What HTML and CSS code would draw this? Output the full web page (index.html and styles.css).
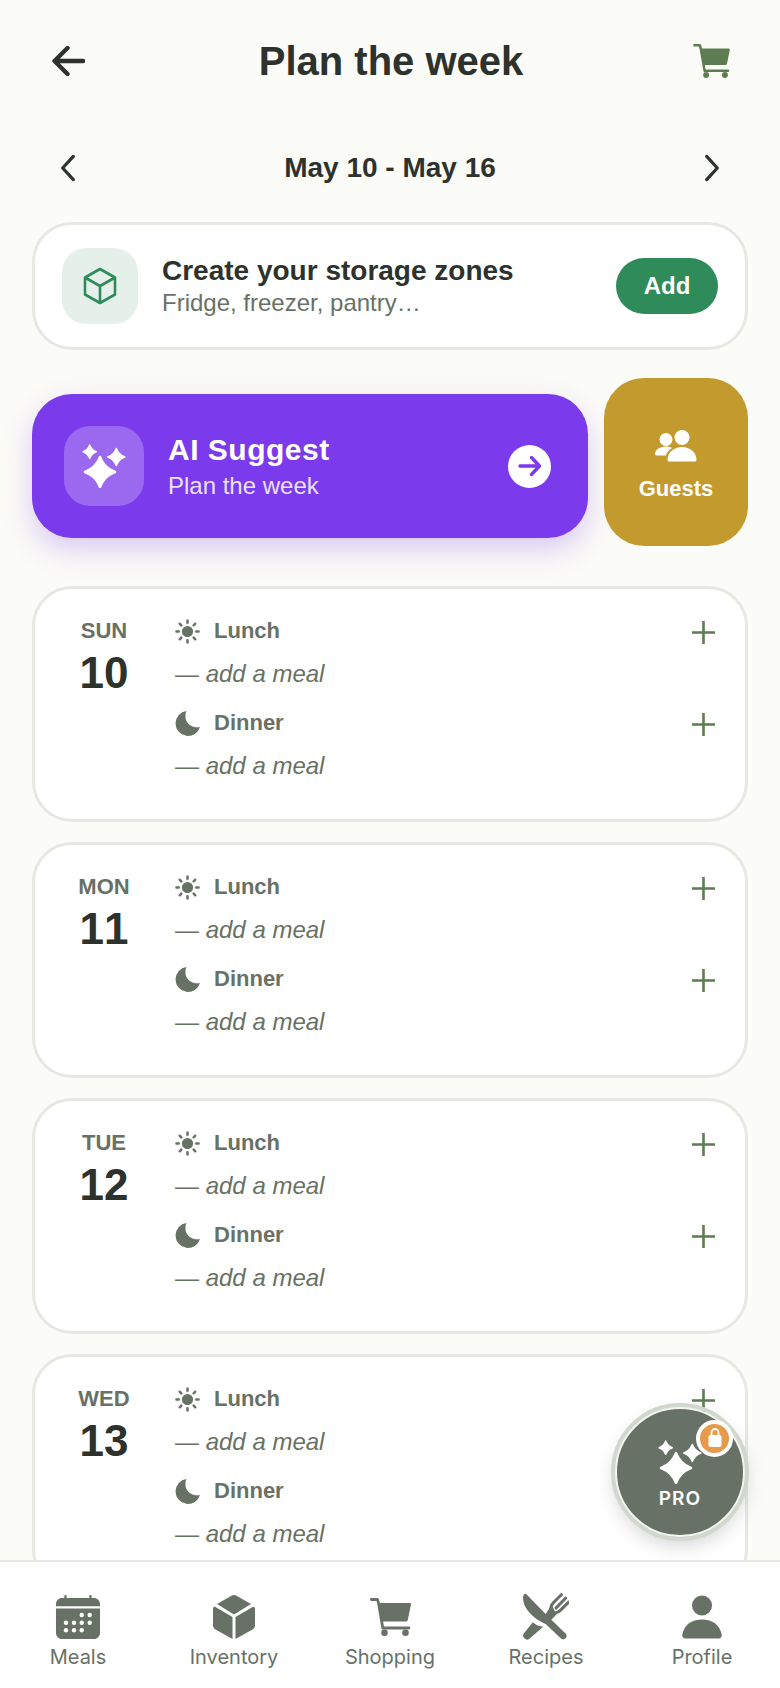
FILE: index.html
```html
<!DOCTYPE html>
<html lang="en">
<head>
<meta charset="utf-8">
<title>Plan the week</title>
<link rel="stylesheet" href="styles.css">
</head>
<body>
<svg class="defs" width="0" height="0" aria-hidden="true">
  <defs>
    <symbol id="sun" viewBox="0 0 26 26">
      <circle cx="13" cy="13" r="5.800" fill="currentColor"/>
      <g stroke="currentColor" stroke-width="2.600" stroke-linecap="round">
        <path d="M13 1.500v2.400M13 22.100v2.400M1.500 13h2.400M22.100 13h2.400M4.900 4.900l1.700 1.700M19.400 19.400l1.700 1.700M4.900 21.100l1.700-1.700M19.400 6.600l1.700-1.700"/>
      </g>
    </symbol>
    <symbol id="moon" viewBox="0 0 26 26">
      <path d="M11.800 0A13 13 0 1 0 26 16.600C20 18.200 12.500 14.500 11.100 8 10.600 5 11 2.500 11.800 0Z" fill="currentColor"/>
    </symbol>
    <symbol id="plus" viewBox="0 0 23 23">
      <path d="M11.500 0v23M0 11.500h23" stroke="currentColor" stroke-width="2.600" fill="none"/>
    </symbol>
    <symbol id="cart" viewBox="0 0 41 38">
      <path d="M1.400 1.500H7.500L8.600 5.500M8.600 5.500l4.200 24.500h26.200" fill="none" stroke="currentColor" stroke-width="2.800" stroke-linecap="round" stroke-linejoin="round"/>
      <path d="M9 5h30.500c1 0 1.600.8 1.400 1.800L37.800 22c-.2.900-1 1.500-1.900 1.500H12.200Z" fill="currentColor"/>
      <circle cx="14.500" cy="34.700" r="3.300" fill="currentColor"/>
      <circle cx="35.500" cy="34.700" r="3.300" fill="currentColor"/>
    </symbol>
    <symbol id="sparks" viewBox="0 0 44 44">
      <path d="M18 13Q22 24 33 28 22 32 18 43 14 32 3 28 14 24 18 13Z" fill="currentColor" stroke="currentColor" stroke-width="2.500" stroke-linejoin="round"/>
      <path d="M7.700 1.200Q9.500 5.900 14.200 7.700 9.500 9.500 7.700 14.200 5.900 9.500 1.200 7.700 5.900 5.900 7.700 1.200Z" fill="currentColor" stroke="currentColor" stroke-width="1.600" stroke-linejoin="round"/>
      <path d="M34.300 4.500Q36.600 10.700 42.800 13 36.600 15.300 34.300 21.500 32 15.300 25.800 13 32 10.700 34.300 4.500Z" fill="currentColor" stroke="currentColor" stroke-width="1.600" stroke-linejoin="round"/>
    </symbol>
  </defs>
</svg>
<div class="app">
  <header class="top">
    <button class="bare" aria-label="Back">
      <svg class="back" viewBox="0 0 33 30"><path d="M31 15H3M15.500 2 2.500 15l13 13" fill="none" stroke="currentColor" stroke-width="4.400" stroke-linecap="round" stroke-linejoin="round"/></svg>
    </button>
    <h1>Plan the week</h1>
    <button class="bare cart-top" aria-label="Cart"><svg class="cart-ic"><use href="#cart"/></svg></button>
  </header>

  <div class="week">
    <svg class="chev" viewBox="0 0 18 30"><path d="M15 2 3 15l12 13" fill="none" stroke="currentColor" stroke-width="3.600" stroke-linecap="round" stroke-linejoin="round"/></svg>
    <div class="range">May 10 - May 16</div>
    <svg class="chev chev-r" viewBox="0 0 18 30"><path d="m3 2 12 13L3 28" fill="none" stroke="currentColor" stroke-width="3.600" stroke-linecap="round" stroke-linejoin="round"/></svg>
  </div>

  <section class="zones">
    <div class="zones-ic">
      <svg viewBox="0 0 34 38"><path d="M17 2 32 10.500v17L17 36 2 27.500v-17ZM2 10.500 17 19l15-8.500M17 19v17" fill="none" stroke="currentColor" stroke-width="2.600" stroke-linejoin="round"/></svg>
    </div>
    <div class="zones-txt">
      <div class="zones-t">Create your storage zones</div>
      <div class="zones-s">Fridge, freezer, pantry…</div>
    </div>
    <button class="add">Add</button>
  </section>

  <section class="actions">
    <div class="ai">
      <div class="ai-ic"><svg><use href="#sparks"/></svg></div>
      <div class="ai-txt">
        <div class="ai-t">AI Suggest</div>
        <div class="ai-s">Plan the week</div>
      </div>
      <div class="ai-go"><svg viewBox="0 0 24 24"><path d="M2 12h19M13.500 3.500 21.500 12l-8 8.500" fill="none" stroke="currentColor" stroke-width="3.400" stroke-linecap="round" stroke-linejoin="round"/></svg></div>
    </div>
    <div class="guests">
      <svg viewBox="0 0 42 32"><circle cx="11" cy="9.500" r="6.500" fill="currentColor"/><circle cx="27" cy="7.500" r="7.500" fill="currentColor"/><path d="M0 23.500C1 18.500 6 16.500 11 16.500c2.500 0 4.500.5 6 1.500-3 2-5.500 4.500-6 7.500H1.500C.5 25.500 0 24.500 0 23.500Z" fill="currentColor"/><path d="M12.500 30c0-7.500 6.500-13 14.500-13s14.500 5.500 14.500 13c0 1-1 1.500-2 1.500h-25c-1 0-2-.5-2-1.500Z" fill="currentColor"/></svg>
      <span>Guests</span>
    </div>
  </section>

  <main class="days">
    <article class="day">
      <div class="date"><div class="dow">SUN</div><div class="num">10</div></div>
      <div class="meals">
        <div class="meal"><div class="mhead"><svg class="mic"><use href="#sun"/></svg><span>Lunch</span><svg class="plus"><use href="#plus"/></svg></div><div class="empty">— <i>add a meal</i></div></div>
        <div class="meal"><div class="mhead"><svg class="mic"><use href="#moon"/></svg><span>Dinner</span><svg class="plus"><use href="#plus"/></svg></div><div class="empty">— <i>add a meal</i></div></div>
      </div>
    </article>
    <article class="day">
      <div class="date"><div class="dow">MON</div><div class="num">11</div></div>
      <div class="meals">
        <div class="meal"><div class="mhead"><svg class="mic"><use href="#sun"/></svg><span>Lunch</span><svg class="plus"><use href="#plus"/></svg></div><div class="empty">— <i>add a meal</i></div></div>
        <div class="meal"><div class="mhead"><svg class="mic"><use href="#moon"/></svg><span>Dinner</span><svg class="plus"><use href="#plus"/></svg></div><div class="empty">— <i>add a meal</i></div></div>
      </div>
    </article>
    <article class="day">
      <div class="date"><div class="dow">TUE</div><div class="num">12</div></div>
      <div class="meals">
        <div class="meal"><div class="mhead"><svg class="mic"><use href="#sun"/></svg><span>Lunch</span><svg class="plus"><use href="#plus"/></svg></div><div class="empty">— <i>add a meal</i></div></div>
        <div class="meal"><div class="mhead"><svg class="mic"><use href="#moon"/></svg><span>Dinner</span><svg class="plus"><use href="#plus"/></svg></div><div class="empty">— <i>add a meal</i></div></div>
      </div>
    </article>
    <article class="day">
      <div class="date"><div class="dow">WED</div><div class="num">13</div></div>
      <div class="meals">
        <div class="meal"><div class="mhead"><svg class="mic"><use href="#sun"/></svg><span>Lunch</span><svg class="plus"><use href="#plus"/></svg></div><div class="empty">— <i>add a meal</i></div></div>
        <div class="meal"><div class="mhead"><svg class="mic"><use href="#moon"/></svg><span>Dinner</span><svg class="plus"><use href="#plus"/></svg></div><div class="empty">— <i>add a meal</i></div></div>
      </div>
    </article>
  </main>

  <div class="fab">
    <svg class="fab-ic"><use href="#sparks"/></svg>
    <span>PRO</span>
    <div class="lock"><svg viewBox="0 0 14 19"><path d="M3.500 8V4.500a3.500 3.500 0 0 1 7 0V8" fill="none" stroke="currentColor" stroke-width="1.800"/><rect x=".5" y="7" width="13" height="12" rx="2" fill="currentColor"/></svg></div>
  </div>

  <nav class="tabs">
    <div class="tab">
      <svg viewBox="0 0 44 44"><path d="M9.500 0c.7 0 1.200.5 1.200 1.200V3h22.600V1.200c0-.7.5-1.200 1.200-1.200s1.200.5 1.200 1.200V3H38c3.300 0 6 2.700 6 6v2.200H0V9c0-3.300 2.700-6 6-6h2.300V1.200C8.300.5 8.800 0 9.500 0ZM0 13.400h44V38c0 3.300-2.700 6-6 6H6c-3.300 0-6-2.700-6-6Z" fill="currentColor"/><g fill="#fff"><circle cx="25.700" cy="20" r="2.200"/><circle cx="33.700" cy="20" r="2.200"/><circle cx="10" cy="27.700" r="2.200"/><circle cx="18" cy="27.700" r="2.200"/><circle cx="25.700" cy="27.700" r="2.200"/><circle cx="33.700" cy="27.700" r="2.200"/><circle cx="10" cy="35.300" r="2.200"/><circle cx="18" cy="35.300" r="2.200"/><circle cx="25.700" cy="35.300" r="2.200"/></g></svg>
      <span>Meals</span>
    </div>
    <div class="tab">
      <svg viewBox="0 0 42 44"><path d="M18.500.7c1.600-.9 3.400-.9 5 0L38 9 21 19.500 4 9Z" fill="currentColor"/><path d="M1.500 11.500 19.500 22v22L2.500 34.500C1 33.600 0 32 0 30.300V14c0-1 .5-1.800 1.500-2.500Z" fill="currentColor"/><path d="M40.500 11.500 22.500 22v22l17-9.500c1.500-.9 2.500-2.500 2.500-4.200V14c0-1-.5-1.800-1.500-2.500Z" fill="currentColor"/></svg>
      <span>Inventory</span>
    </div>
    <div class="tab">
      <svg class="tab-cart"><use href="#cart"/></svg>
      <span>Shopping</span>
    </div>
    <div class="tab">
      <svg class="tab-recipes" viewBox="0 0 132 135">
        <path d="M28 84C36 92 48 96 58 97L20 130A10 10 0 0 1 4 114Z" fill="currentColor"/>
        <path d="M82 34 96 62 70 88 58 72Z" fill="currentColor"/>
        <path d="M110 5 87 28C78 37 79 49 85 56M122 15 95 43M131 26 108 49C99 58 88 60 80 52" fill="none" stroke="currentColor" stroke-width="9" stroke-linecap="round"/>
        <path d="M65 89C52 85 40 78 30 69" fill="none" stroke="#fff" stroke-width="7"/>
        <path d="M9 3 79 75 123 117A10 10 0 0 1 109 131L65 89C40 80 0 50 0 14 0 6 4 0 9 3Z" fill="currentColor"/>
      </svg>
      <span>Recipes</span>
    </div>
    <div class="tab">
      <svg viewBox="0 0 42 46"><circle cx="21" cy="11" r="10.500" fill="currentColor"/><path d="M.5 41C2.500 31 10 25.500 21 25.500S39.500 31 41.500 41c.6 2.500-.8 4.500-3 4.500h-35c-2.200 0-3.600-2-3-4.500Z" fill="currentColor"/></svg>
      <span>Profile</span>
    </div>
  </nav>
</div>
</body>
</html>
```
FILE: styles.css
```css
* { box-sizing: border-box; }
html, body { margin: 0; padding: 0; }
body { background: #fbfbf7; font-family: "Liberation Sans", Arial, sans-serif; color: #2d322c; }
.defs { position: absolute; }
.app { position: relative; width: 780px; height: 1688px; overflow: hidden; }
.bare { background: none; border: 0; padding: 0; color: inherit; display: flex; }

.top { display: grid; grid-template-columns: 1fr auto 1fr; align-items: center; height: 50px; margin-top: 36px; padding: 0 50px 0 52px; }
.back { width: 33px; height: 30px; }
.top h1 { margin: 0; font-size: 40px; line-height: 50px; font-weight: 700; }
.cart-top { color: #5e7c52; justify-self: end; }
.cart-ic { width: 37px; height: 34px; }

.week { display: grid; grid-template-columns: 1fr auto 1fr; align-items: center; margin-top: 62px; height: 40px; padding: 0 60px; }
.chev { width: 16px; height: 28px; }
.chev-r { justify-self: end; }
.range { font-size: 28px; font-weight: 700; }

.zones { display: flex; align-items: center; margin: 34px 32px 0; height: 128px; background: #fff; border: 3px solid #e8e8e3; border-radius: 40px; padding: 0 27px; }
.zones-ic { width: 76px; height: 76px; border-radius: 24px; background: #e6f0ea; color: #2f8b59; display: flex; align-items: center; justify-content: center; }
.zones-ic svg { width: 34px; height: 38px; }
.zones-txt { flex: 1; margin-left: 24px; }
.zones-t { font-size: 28px; font-weight: 700; line-height: 34px; }
.zones-s { font-size: 24px; line-height: 30px; color: #687165; }
.add { width: 102px; height: 56px; border: 0; border-radius: 28px; background: #2f8b59; color: #fff; font: 700 24px "Liberation Sans", Arial, sans-serif; padding: 0; }

.actions { display: flex; align-items: center; gap: 16px; margin: 28px 32px 0; }
.ai { flex: 1; height: 144px; margin-top: 8px; display: flex; align-items: center; background: #7c3aed; border-radius: 40px; padding: 0 37px 0 32px; box-shadow: 0 12px 28px rgba(124, 58, 237, 0.25); color: #fff; }
.ai-ic { width: 80px; height: 80px; border-radius: 26px; background: #9b68f0; display: flex; align-items: center; justify-content: center; }
.ai-ic svg { width: 44px; height: 44px; }
.ai-txt { flex: 1; margin-left: 24px; }
.ai-t { font-size: 30px; font-weight: 700; line-height: 36px; letter-spacing: 0.5px; }
.ai-s { font-size: 24px; line-height: 30px; color: #ebe1fc; margin-top: 3px; }
.ai-go { width: 43px; height: 43px; border-radius: 50%; background: #fff; color: #7c3aed; display: flex; align-items: center; justify-content: center; }
.ai-go svg { width: 24px; height: 24px; }
.guests { width: 144px; height: 168px; border-radius: 40px; background: #c39a2d; color: #fff; display: flex; flex-direction: column; align-items: center; padding-top: 52px; }
.guests svg { width: 42px; height: 32px; }
.guests span { font-size: 22px; font-weight: 700; line-height: 30px; margin-top: 12px; }

.days { display: flex; flex-direction: column; gap: 20px; margin: 40px 32px 0; }
.day { flex: none; display: flex; height: 236px; background: #fff; border: 3px solid #e8e8e3; border-radius: 40px; padding: 27px 30px 0 25px; }
.date { width: 88px; text-align: center; }
.dow { font-size: 22px; font-weight: 700; line-height: 30px; color: #687165; }
.num { font-size: 44px; font-weight: 700; line-height: 52px; margin-top: 1px; color: #2d322c; font-kerning: none; }
.meals { flex: 1; margin-left: 27px; color: #687165; }
.meal { height: 92px; }
.mhead { display: flex; align-items: center; height: 30px; font-size: 22px; font-weight: 700; }
.mic { width: 25px; height: 25px; margin-right: 14px; }
.mhead span { flex: 1; }
.plus { width: 23px; height: 23px; color: #5e7c52; margin-top: 2px; }
.empty { font-size: 24px; line-height: 36px; margin-top: 10px; }
.empty i { font-style: italic; }

.fab { position: absolute; left: 615px; top: 1407px; width: 130px; height: 130px; border-radius: 50%; background: #687165; border: 2px solid #f4f4f0; outline: 4px solid #d0d8cd; color: #fff; box-shadow: 0 8px 20px rgba(0,0,0,.18); display: flex; flex-direction: column; align-items: center; padding-top: 31px; }
.fab-ic { width: 44px; height: 44px; }
.fab span { font: 600 19px Inter, sans-serif; letter-spacing: 1px; margin-top: 3px; }
.lock { position: absolute; right: 10px; top: 11px; width: 37px; height: 37px; border-radius: 50%; background: #e79a4c; border: 4px solid #fff; color: #fff; display: flex; align-items: center; justify-content: center; }
.lock svg { width: 14px; height: 19px; margin-top: -2px; }

.tabs { position: absolute; left: 0; right: 0; bottom: 0; height: 128px; background: #fff; border-top: 2px solid #e8e8e3; display: grid; grid-template-columns: repeat(5, 1fr); }
.tab { display: flex; flex-direction: column; align-items: center; color: #687165; padding-top: 33px; }
.tab svg { width: 44px; height: 44px; }
.tab .tab-cart { width: 41px; height: 38px; margin: 3px 0; }
.tab .tab-recipes { width: 46px; height: 47px; margin: -2px 0 -1px; }
.tab span { font: 400 20px Inter, sans-serif; line-height: 28px; margin-top: 4px; }
```
